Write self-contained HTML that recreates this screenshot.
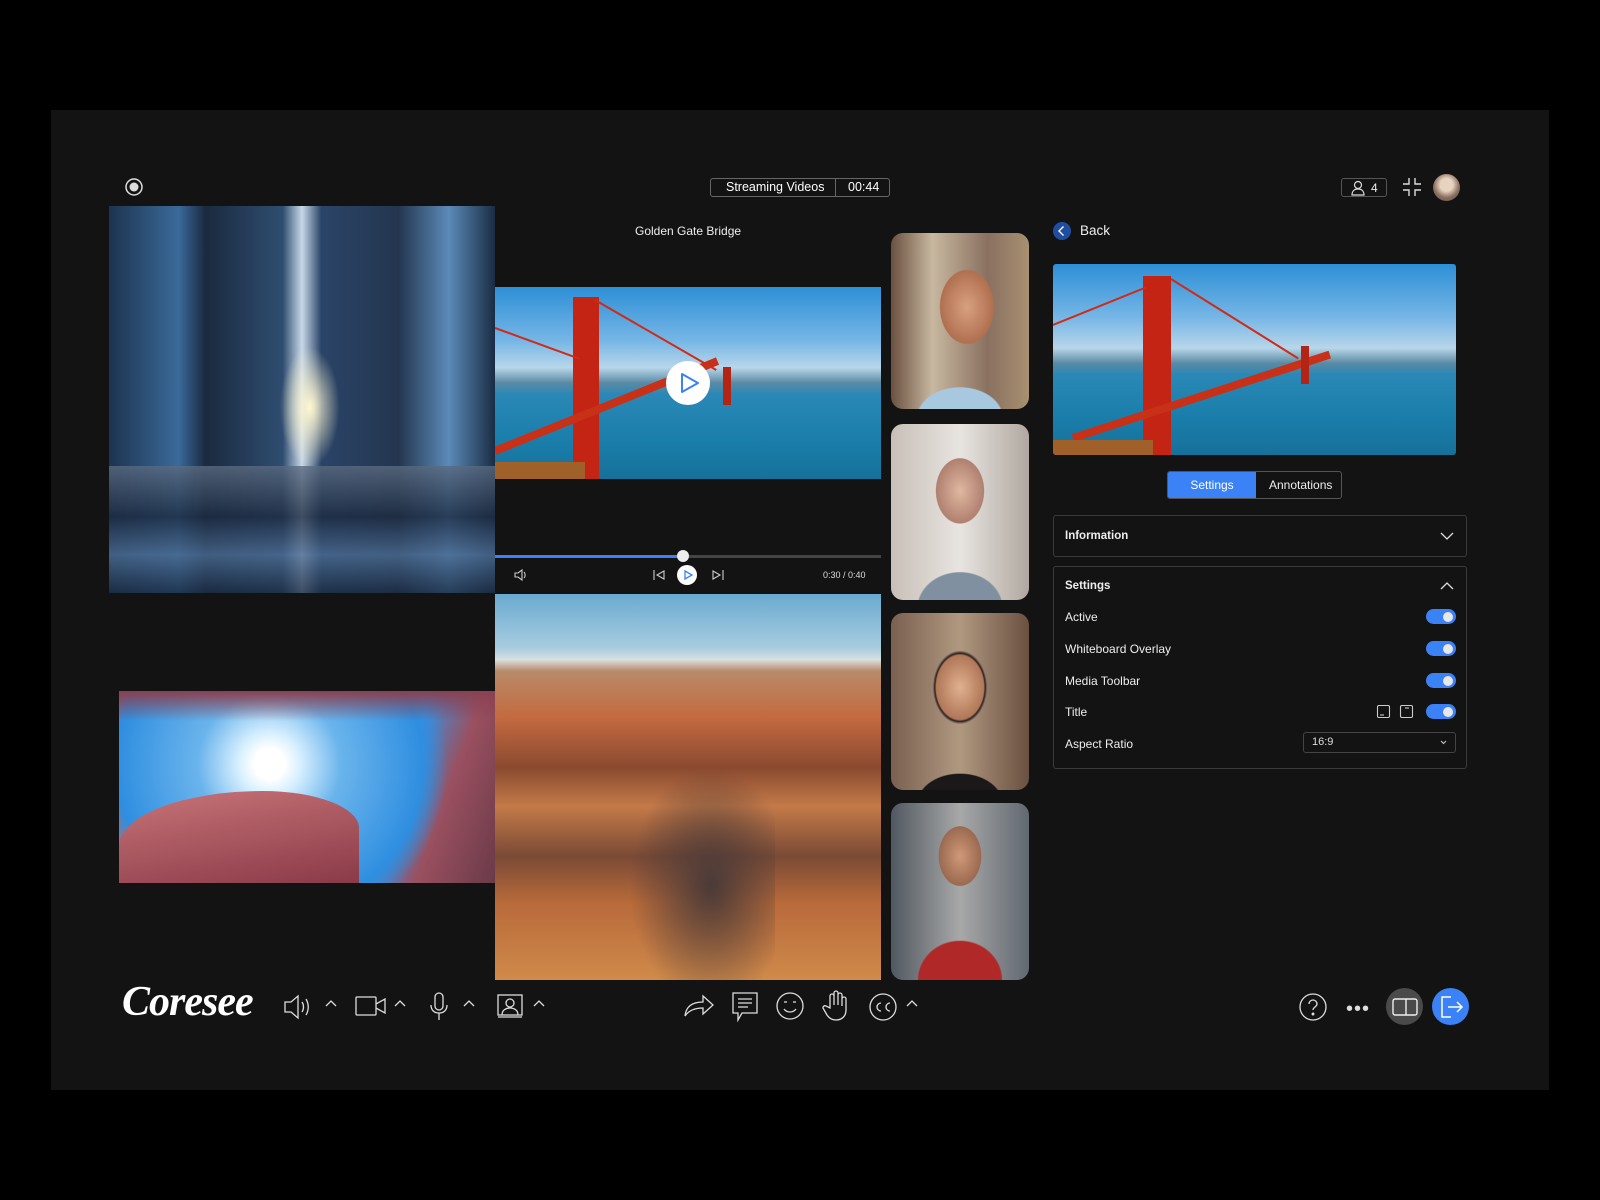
<!DOCTYPE html>
<html><head><meta charset="utf-8"><style>
*{margin:0;padding:0;box-sizing:border-box}
body{width:1600px;height:1200px;background:#000;font-family:"Liberation Sans",sans-serif;color:#eee;position:relative;overflow:hidden}
.a{position:absolute}
#panel{left:51px;top:110px;width:1498px;height:980px;background:#131313}
.img{position:absolute;overflow:hidden}
.tile{border-radius:12px}
.t{font-size:12px;color:#eee}
.tog{position:absolute;left:1426px;width:30px;height:15px;border-radius:8px;background:#3b82f6}
.tog:after{content:"";position:absolute;right:3px;top:2.5px;width:10px;height:10px;border-radius:50%;background:#e8e8e8}
svg{position:absolute;overflow:visible}
</style></head><body>
<div class="a" id="panel"></div>

<!-- record icon -->
<svg style="left:124px;top:177px" width="20" height="20"><circle cx="10" cy="10" r="8" fill="none" stroke="#ddd" stroke-width="1.5"/><circle cx="10" cy="10" r="4.5" fill="#ddd"/></svg>

<!-- title box -->
<div class="a" style="left:710px;top:178px;width:180px;height:19px;border:1px solid #666;border-radius:3px;font-size:12.5px;line-height:17px;color:#fff">
<span class="a" style="left:15px">Streaming Videos</span>
<span class="a" style="left:124px;top:-1px;height:19px;border-left:1px solid #666"></span>
<span class="a" style="left:137px">00:44</span></div>

<!-- top right -->
<div class="a" style="left:1341px;top:178px;width:46px;height:19px;border:1px solid #555;border-radius:3px"></div>
<svg style="left:1350px;top:180px" width="16" height="16"><circle cx="8" cy="5" r="3.5" fill="none" stroke="#ddd" stroke-width="1.2"/><path d="M2 15c0-4 2.5-6 6-6s6 2 6 6z" fill="none" stroke="#ddd" stroke-width="1.2"/></svg>
<div class="a t" style="left:1371px;top:181px;font-size:12px">4</div>
<svg style="left:1403px;top:178px" width="18" height="18" fill="none" stroke="#ddd" stroke-width="1.4"><path d="M6 0v6H0M12 0v6h6M0 12h6v6M18 12h-6v6"/></svg>
<div class="a" style="left:1433px;top:174px;width:27px;height:27px;border-radius:50%;background:radial-gradient(circle at 50% 40%,#e8d2c0 0 30%,#8a7060 60%,#5a4a40)"></div>

<!-- building image -->
<div class="img" style="left:109px;top:206px;width:386px;height:387px;background:
radial-gradient(ellipse 30px 60px at 52% 52%,#fff7d0,rgba(255,240,200,0) ),
linear-gradient(90deg,#1d3350 0%,#3a6a9a 18%,#1a2a40 25%,#2f4d70 45%,#c8d8e8 50%,#2a4468 55%,#24364f 75%,#5b8ab8 88%,#1a2c44 100%)">
<div class="a" style="left:0;top:260px;width:386px;height:127px;background:linear-gradient(180deg,#5a6a80,#1c2a40 40%,#4a6a90 70%,#1a2a40);opacity:.8"></div></div>

<!-- caption -->
<div class="a t" style="left:635px;top:224px">Golden Gate Bridge</div>

<!-- video -->
<div class="img" style="left:495px;top:287px;width:386px;height:192px;background:linear-gradient(180deg,#2d8fd6 0%,#76b6e6 28%,#b8d6ea 42%,#5a8aa4 50%,#2a88b6 56%,#1a7eaa 80%,#16719a 100%)">
<div class="a" style="left:78px;top:10px;width:26px;height:182px;background:#c42414"></div>
<div class="a" style="left:0;top:40px;width:90px;height:2px;background:#d02a18;transform:rotate(20deg);transform-origin:left"></div>
<div class="a" style="left:100px;top:12px;width:140px;height:2px;background:#d02a18;transform:rotate(30deg);transform-origin:left"></div>
<div class="a" style="left:0;top:160px;width:240px;height:8px;background:#c83018;transform:rotate(-22deg);transform-origin:left"></div>
<div class="a" style="left:228px;top:80px;width:8px;height:38px;background:#b42414"></div>
<div class="a" style="left:0;top:175px;width:90px;height:17px;background:#a0602a"></div>
</div>
<div class="a" style="left:666px;top:361px;width:44px;height:44px;border-radius:50%;background:#fff"></div>
<svg style="left:680px;top:372px" width="20" height="22"><path d="M2 2L18 11 2 20Z" fill="none" stroke="#3b82f6" stroke-width="2" stroke-linejoin="round"/></svg>

<!-- progress -->
<div class="a" style="left:495px;top:555px;width:386px;height:3px;background:#444"></div>
<div class="a" style="left:495px;top:555px;width:188px;height:3px;background:#3b82f6"></div>
<div class="a" style="left:677px;top:550px;width:12px;height:12px;border-radius:50%;background:#eee"></div>
<svg style="left:514px;top:569px" width="14" height="12" fill="none" stroke="#ccc" stroke-width="1.1"><path d="M1 4h3l4-3v10l-4-3H1z M10 3c1.5 1.5 1.5 4.5 0 6"/></svg>
<svg style="left:653px;top:570px" width="12" height="10" fill="none" stroke="#ccc" stroke-width="1.1"><path d="M1 0v10M11 1L4 5l7 4z"/></svg>
<div class="a" style="left:677px;top:565px;width:20px;height:20px;border-radius:50%;background:#fff"></div>
<svg style="left:684px;top:570px" width="9" height="10"><path d="M1 1l7 4-7 4z" fill="none" stroke="#3b82f6" stroke-width="1.3"/></svg>
<svg style="left:712px;top:570px" width="12" height="10" fill="none" stroke="#ccc" stroke-width="1.1"><path d="M11 0v10M1 1l7 4-7 4z"/></svg>
<div class="a" style="left:823px;top:570px;font-size:9px;color:#ddd">0:30 / 0:40</div>

<!-- canyon -->
<div class="img" style="left:495px;top:594px;width:386px;height:386px;background:linear-gradient(180deg,#6aaad0 0%,#a8cce0 14%,#d8e0e0 17%,#b88a68 20%,#c46a40 32%,#8a4a30 45%,#c47a48 55%,#7a4a36 68%,#b86a3a 80%,#d08a4a 100%)">
<div class="a" style="left:120px;top:150px;width:160px;height:236px;background:radial-gradient(ellipse at 60% 60%,#4a3a38,rgba(80,60,50,0) 60%)"></div></div>

<!-- antelope -->
<div class="img" style="left:119px;top:691px;width:376px;height:192px;background:
radial-gradient(circle at 40% 38%,#fff 0 6%,#d8f0ff 12%,#6ab4ec 28%,#2f8ee0 60%,rgba(40,130,220,0) 70%),
linear-gradient(110deg,#b05a60 0%,#c4787a 22%,#4a98e0 40%,#3a90e0 70%,#9a5060 82%,#6a3a48 100%)">
<div class="a" style="left:0;top:100px;width:240px;height:92px;background:linear-gradient(170deg,#c87478,#8a3a48);border-radius:60% 40% 0 0"></div>
<div class="a" style="left:0;top:0;width:376px;height:30px;background:linear-gradient(180deg,#8a4050,rgba(180,90,100,0))"></div></div>

<!-- people -->
<div class="img tile" style="left:891px;top:233px;width:138px;height:176px;background:radial-gradient(ellipse 38px 52px at 55% 42%,#d8a080,#b07050 70%,rgba(0,0,0,0) 72%),radial-gradient(ellipse 70px 50px at 50% 105%,#a8c8e0 60%,rgba(0,0,0,0) 62%),linear-gradient(90deg,#6a5040,#c8b8a0 30%,#8a7060 70%,#a89070)"></div>
<div class="img tile" style="left:891px;top:424px;width:138px;height:176px;background:radial-gradient(ellipse 34px 46px at 50% 38%,#e0b8a0,#b08070 70%,rgba(0,0,0,0) 72%),radial-gradient(ellipse 70px 60px at 50% 105%,#8090a0 60%,rgba(0,0,0,0) 62%),linear-gradient(90deg,#c8c0b8,#e8e4e0 50%,#b0a8a0)"></div>
<div class="img tile" style="left:891px;top:613px;width:138px;height:177px;background:radial-gradient(ellipse 34px 46px at 50% 42%,#e0b090,#b07858 70%,#2a2020 74%,rgba(0,0,0,0) 80%),radial-gradient(ellipse 70px 50px at 50% 108%,#1a1818 60%,rgba(0,0,0,0) 62%),linear-gradient(90deg,#7a6050,#b09880 50%,#6a5040)"></div>
<div class="img tile" style="left:891px;top:803px;width:138px;height:177px;background:radial-gradient(ellipse 30px 42px at 50% 30%,#d09878,#9a6a50 70%,rgba(0,0,0,0) 72%),radial-gradient(ellipse 75px 70px at 50% 100%,#b02828 55%,rgba(0,0,0,0) 57%),linear-gradient(90deg,#505860,#a8a8a8 50%,#606870)"></div>

<!-- right panel -->
<svg style="left:1052px;top:221px" width="20" height="20"><circle cx="10" cy="10" r="9" fill="#1f4ea0"/><path d="M11.5 5.5L7 10l4.5 4.5" fill="none" stroke="#fff" stroke-width="1.4"/></svg>
<div class="a" style="left:1080px;top:223px;font-size:13.5px;color:#eee">Back</div>
<div class="img" style="left:1053px;top:264px;width:403px;height:191px;border-radius:3px;background:linear-gradient(180deg,#2d8fd6 0%,#76b6e6 28%,#b8d6ea 44%,#5a8aa4 52%,#2a88b6 58%,#1a7eaa 80%,#16719a 100%)">
<div class="a" style="left:90px;top:12px;width:28px;height:179px;background:#c42414"></div>
<div class="a" style="left:0;top:60px;width:100px;height:2px;background:#d02a18;transform:rotate(-22deg);transform-origin:left"></div>
<div class="a" style="left:118px;top:14px;width:150px;height:2px;background:#d02a18;transform:rotate(32deg);transform-origin:left"></div>
<div class="a" style="left:20px;top:170px;width:270px;height:8px;background:#c83018;transform:rotate(-18deg);transform-origin:left"></div>
<div class="a" style="left:248px;top:82px;width:8px;height:38px;background:#b42414"></div>
<div class="a" style="left:0;top:176px;width:100px;height:15px;background:#a0602a"></div>
</div>
<div class="a" style="left:1167px;top:471px;width:175px;height:28px;border:1px solid #555;border-radius:3px"></div>
<div class="a" style="left:1168px;top:472px;width:88px;height:26px;background:#3b82f6;border-radius:2px 0 0 2px;font-size:12px;color:#fff;text-align:center;line-height:27px">Settings</div>
<div class="a t" style="left:1269px;top:478px">Annotations</div>

<div class="a" style="left:1053px;top:515px;width:414px;height:42px;border:1px solid #3a3a3a;border-radius:3px"></div>
<div class="a" style="left:1065px;top:530px;font-size:11.5px;font-weight:bold">Information</div>
<svg style="left:1440px;top:532px" width="14" height="8"><path d="M1 1l6 6 6-6" fill="none" stroke="#ddd" stroke-width="1.3"/></svg>

<div class="a" style="left:1053px;top:566px;width:414px;height:203px;border:1px solid #3a3a3a;border-radius:3px"></div>
<div class="a" style="left:1065px;top:580px;font-size:11.5px;font-weight:bold">Settings</div>
<svg style="left:1440px;top:582px" width="14" height="8"><path d="M1 7l6-6 6 6" fill="none" stroke="#ddd" stroke-width="1.3"/></svg>
<div class="a t" style="left:1065px;top:610px">Active</div>
<div class="a t" style="left:1065px;top:642px">Whiteboard Overlay</div>
<div class="a t" style="left:1065px;top:674px">Media Toolbar</div>
<div class="a t" style="left:1065px;top:705px">Title</div>
<div class="a t" style="left:1065px;top:737px">Aspect Ratio</div>
<div class="tog" style="top:609px"></div>
<div class="tog" style="top:641px"></div>
<div class="tog" style="top:673px"></div>
<div class="tog" style="top:704px"></div>
<svg style="left:1377px;top:705px" width="13" height="13" fill="none" stroke="#ccc" stroke-width="1.1"><rect x=".5" y=".5" width="12" height="12" rx="1.5"/><path d="M3 10h4"/></svg>
<svg style="left:1400px;top:705px" width="13" height="13" fill="none" stroke="#ccc" stroke-width="1.1"><rect x=".5" y=".5" width="12" height="12" rx="1.5"/><path d="M5 3h4"/></svg>
<div class="a" style="left:1303px;top:732px;width:153px;height:21px;border:1px solid #444;border-radius:3px"></div>
<div class="a" style="left:1312px;top:736px;font-size:11px;color:#ddd">16:9</div>
<svg style="left:1440px;top:740px" width="7" height="5"><path d="M1 1l2.5 2.5L6 1" fill="none" stroke="#ccc"/></svg>

<!-- toolbar -->
<div class="a" style="left:122px;top:980px;font-family:'Liberation Serif',serif;font-style:italic;font-weight:bold;font-size:42px;color:#fff;letter-spacing:-1px;line-height:44px">Coresee</div>
<g></g>
<svg style="left:284px;top:994px" width="32" height="26" fill="none" stroke="#ddd" stroke-width="1.3"><path d="M1 8h6l7-6v22l-7-6H1z M18 8c2 3 2 7 0 10 M22 5c3 5 3 11 0 16"/></svg>
<svg style="left:325px;top:1000px" width="12" height="7" fill="none" stroke="#ddd" stroke-width="1.3"><path d="M1 6l5-5 5 5"/></svg>
<svg style="left:355px;top:996px" width="32" height="20" fill="none" stroke="#ddd" stroke-width="1.3"><rect x="1" y="1" width="20" height="18" rx="1"/><path d="M21 8l9-5v14l-9-5"/></svg>
<svg style="left:394px;top:1000px" width="12" height="7" fill="none" stroke="#ddd" stroke-width="1.3"><path d="M1 6l5-5 5 5"/></svg>
<svg style="left:430px;top:992px" width="18" height="30" fill="none" stroke="#ddd" stroke-width="1.3"><rect x="5" y="1" width="8" height="17" rx="4"/><path d="M1 13c0 5 3 8 8 8s8-3 8-8M9 21v7"/></svg>
<svg style="left:463px;top:1000px" width="12" height="7" fill="none" stroke="#ddd" stroke-width="1.3"><path d="M1 6l5-5 5 5"/></svg>
<svg style="left:497px;top:994px" width="26" height="24" fill="none" stroke="#ddd" stroke-width="1.3"><rect x="1" y="1" width="24" height="20"/><circle cx="13" cy="9" r="4"/><path d="M5 21c0-5 4-7 8-7s8 2 8 7M1 23h24"/></svg>
<svg style="left:533px;top:1000px" width="12" height="7" fill="none" stroke="#ddd" stroke-width="1.3"><path d="M1 6l5-5 5 5"/></svg>

<svg style="left:683px;top:992px" width="32" height="26" fill="none" stroke="#ddd" stroke-width="1.3"><path d="M2 24c1-10 8-14 18-14V4l10 9-10 9v-6C12 16 6 18 2 24z"/></svg>
<svg style="left:732px;top:992px" width="26" height="30" fill="none" stroke="#ddd" stroke-width="1.3"><path d="M1 1h24v20H10l-4 7v-7H1z M6 7h14M6 11h14M6 15h10"/></svg>
<svg style="left:776px;top:992px" width="28" height="28" fill="none" stroke="#ddd" stroke-width="1.3"><circle cx="14" cy="14" r="13"/><path d="M8 10h3M17 10h3M8 17c3 4 9 4 12 0"/></svg>
<svg style="left:823px;top:990px" width="26" height="32" fill="none" stroke="#ddd" stroke-width="1.3"><path d="M7 18V6a2 2 0 014 0v9V3a2 2 0 014 0v12V5a2 2 0 014 0v11V9a2 2 0 014 0v11c0 6-4 10-10 10-4 0-7-2-9-5l-4-7a2 2 0 013-2z"/></svg>
<svg style="left:869px;top:993px" width="28" height="28" fill="none" stroke="#ddd" stroke-width="1.3"><circle cx="14" cy="14" r="13"/><path d="M12 10a4 4 0 100 8M21 10a4 4 0 100 8"/></svg>
<svg style="left:906px;top:1000px" width="12" height="7" fill="none" stroke="#ddd" stroke-width="1.3"><path d="M1 6l5-5 5 5"/></svg>

<svg style="left:1299px;top:993px" width="28" height="28" fill="none" stroke="#ddd" stroke-width="1.3"><circle cx="14" cy="14" r="13"/><path d="M10 11a4 4 0 118 0c0 3-4 3-4 6"/><circle cx="14" cy="21" r=".8" fill="#ddd"/></svg>
<div class="a" style="left:1346px;top:1004px;font-size:20px;color:#ddd;letter-spacing:1px;line-height:10px">•••</div>
<div class="a" style="left:1386px;top:988px;width:37px;height:37px;border-radius:50%;background:#4a4a4a"></div>
<svg style="left:1392px;top:998px" width="26" height="18" fill="none" stroke="#eee" stroke-width="1.4"><rect x="1" y="1" width="24" height="16" rx="2"/><path d="M14 1v16"/></svg>
<div class="a" style="left:1432px;top:988px;width:37px;height:37px;border-radius:50%;background:#3b82f6"></div>
<svg style="left:1440px;top:996px" width="24" height="22" fill="none" stroke="#fff" stroke-width="1.5"><path d="M11 1H2v20h9M8 11h14M17 6l5 5-5 5"/></svg>
</body></html>
